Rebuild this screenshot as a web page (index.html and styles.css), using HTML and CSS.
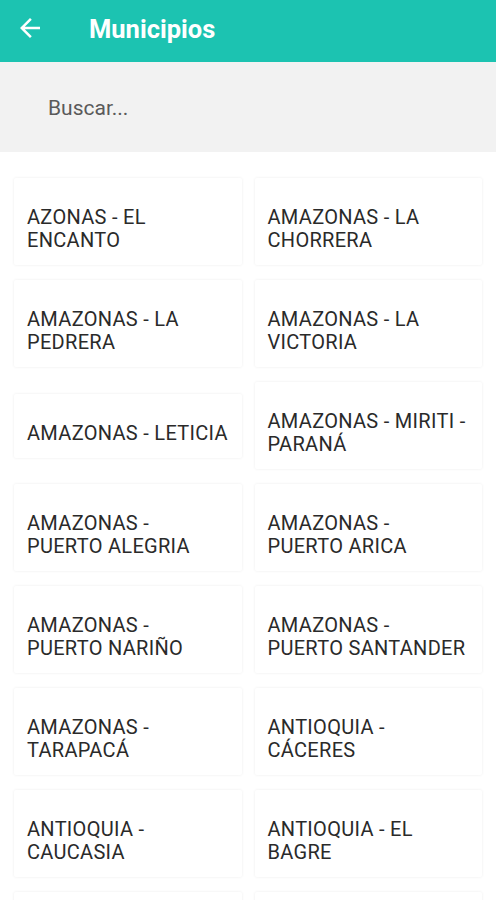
FILE: index.html
```html
<!DOCTYPE html>
<html lang="es">
<head>
<meta charset="UTF-8">
<meta name="viewport" content="width=device-width, initial-scale=1.0">
<title>Municipios</title>
<link rel="stylesheet" href="styles.css">
</head>
<body>
<div class="toolbar">
    <svg class="back" width="30" height="30" viewBox="0 0 24 24">
        <path d="M20 11H7.83l5.59-5.59L12 4l-8 8 8 8 1.41-1.41L7.83 13H20v-2z" fill="#fff"/>
    </svg>
    <h1>Municipios</h1>
</div>
<div class="search">
    <input type="text" placeholder="Buscar...">
</div>
<div class="list">
    <div class="item">AZONAS - EL ENCANTO</div>
    <div class="item">AMAZONAS - LA CHORRERA</div>
    <div class="item">AMAZONAS - LA PEDRERA</div>
    <div class="item">AMAZONAS - LA VICTORIA</div>
    <div class="item">AMAZONAS - LETICIA</div>
    <div class="item">AMAZONAS - MIRITI - PARANÁ</div>
    <div class="item">AMAZONAS - PUERTO ALEGRIA</div>
    <div class="item">AMAZONAS - PUERTO ARICA</div>
    <div class="item">AMAZONAS - PUERTO NARIÑO</div>
    <div class="item">AMAZONAS - PUERTO SANTANDER</div>
    <div class="item">AMAZONAS - TARAPACÁ</div>
    <div class="item">ANTIOQUIA - CÁCERES</div>
    <div class="item">ANTIOQUIA - CAUCASIA</div>
    <div class="item">ANTIOQUIA - EL BAGRE</div>
    <div class="item">ANTIOQUIA - NECHÍ</div>
    <div class="item">ANTIOQUIA - TARAZÁ</div>
</div>
</body>
</html>
```

FILE: styles.css
```css
body {
    font-family: Roboto, Arial, sans-serif;
    margin: 0;
    background-color: #fff;
}

.toolbar {
    background-color: #1cc3b1;
    height: 62px;
    display: flex;
    align-items: center;
    padding: 0 15px;
    box-sizing: border-box;
}

.back {
    margin-top: -6px;
}

.toolbar h1 {
    color: #fff;
    font-size: 25.5px;
    font-weight: bold;
    margin: -5px 0 0 44px;
}

.search {
    background-color: #f2f2f2;
    height: 90px;
    display: flex;
    align-items: center;
    padding: 0 48px;
}

.search input {
    border: none;
    background: transparent;
    font-family: Roboto, Arial, sans-serif;
    font-size: 21px;
    color: #333;
    outline: none;
    width: 100%;
    padding: 0;
    margin-top: 2px;
}

.search input::placeholder {
    color: #5a5a5a;
}

.list {
    display: grid;
    grid-template-columns: 1fr 1fr;
    align-items: center;
    column-gap: 13px;
    row-gap: 15px;
    padding: 26px 14px 0;
}

.item {
    background-color: #fff;
    box-shadow: 0 0 3px rgba(0, 0, 0, 0.08);
    border-radius: 2px;
    padding: 28px 13px 13px;
    font-size: 20px;
    letter-spacing: 0.3px;
    line-height: 23px;
    color: #2a2a2a;
}
```
